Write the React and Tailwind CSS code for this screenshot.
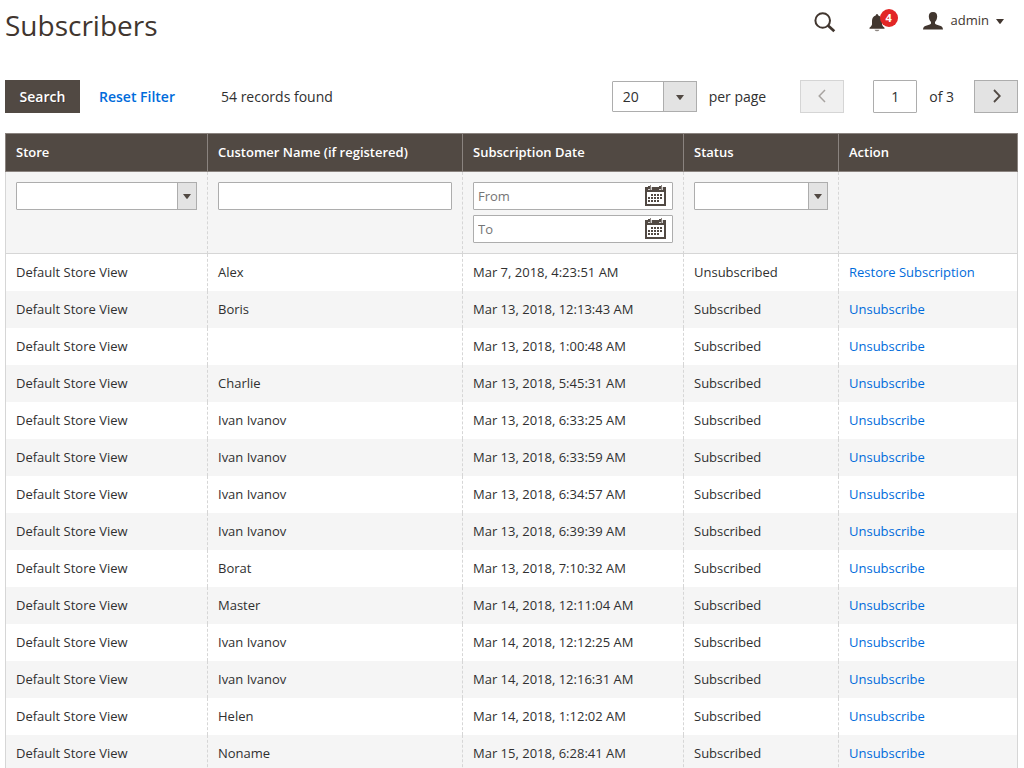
import React from "react";

const rows = [
  ["Alex", "Mar 7, 2018, 4:23:51 AM", "Unsubscribed"],
  ["Boris", "Mar 13, 2018, 12:13:43 AM", "Subscribed"],
  ["", "Mar 13, 2018, 1:00:48 AM", "Subscribed"],
  ["Charlie", "Mar 13, 2018, 5:45:31 AM", "Subscribed"],
  ["Ivan Ivanov", "Mar 13, 2018, 6:33:25 AM", "Subscribed"],
  ["Ivan Ivanov", "Mar 13, 2018, 6:33:59 AM", "Subscribed"],
  ["Ivan Ivanov", "Mar 13, 2018, 6:34:57 AM", "Subscribed"],
  ["Ivan Ivanov", "Mar 13, 2018, 6:39:39 AM", "Subscribed"],
  ["Borat", "Mar 13, 2018, 7:10:32 AM", "Subscribed"],
  ["Master", "Mar 14, 2018, 12:11:04 AM", "Subscribed"],
  ["Ivan Ivanov", "Mar 14, 2018, 12:12:25 AM", "Subscribed"],
  ["Ivan Ivanov", "Mar 14, 2018, 12:16:31 AM", "Subscribed"],
  ["Helen", "Mar 14, 2018, 1:12:02 AM", "Subscribed"],
  ["Noname", "Mar 15, 2018, 6:28:41 AM", "Subscribed"],
];

const headings = ["Store", "Customer Name (if registered)", "Subscription Date", "Status", "Action"];

function Caret({ className }) {
  return (
    <svg className={className} width="8" height="5" viewBox="0 0 8 5" aria-hidden="true">
      <path d="M0 0h8L4.6 4.6q-.6.6-1.2 0z" fill="currentColor" />
    </svg>
  );
}

function SelectBox({ label, options, large }) {
  return (
    <div className={large ? "relative h-[31px] w-[85px]" : "relative h-7 w-full"}>
      <select
        aria-label={label}
        className={
          "h-full w-full appearance-none rounded-[1px] border border-[#adadad] bg-white outline-none " +
          (large ? "pl-2.5 pr-9 text-sm" : "pl-1 pr-6 text-[13px]")
        }
      >
        {options.map((option) => (
          <option key={option}>{option}</option>
        ))}
      </select>
      <span
        className={
          "pointer-events-none absolute inset-y-0 right-0 flex items-center justify-center border border-[#adadad] bg-[#e3e3e3] text-[#514943] " +
          (large ? "w-[34px] pt-0.5" : "w-5")
        }
      >
        <Caret />
      </span>
    </div>
  );
}

function CalendarIcon() {
  return (
    <svg className="block" width="21" height="21" viewBox="0 0 21 21" aria-hidden="true">
      <path d="M0 2h21v19H0z" fill="#514943" />
      <path d="M2 7h17v12H2z" fill="#fff" />
      <path d="M3 0h4v5H3zM14 0h4v5h-4z" fill="#fff" opacity=".75" />
      <path d="M3 1h2v3H3zM14 1h2v3h-2z" fill="#514943" />
      <path d="M5 0h1v5H5zM16 0h1v5h-1z" fill="#8a837f" />
      <path
        d="M6 9h2v2H6zM9 9h2v2H9zM12 9h2v2h-2zM15 9h2v2h-2zM3 12h2v2H3zM6 12h2v2H6zM9 12h2v2H9zM12 12h2v2h-2zM15 12h2v2h-2zM3 15h2v2H3zM6 15h2v2H6zM9 15h2v2H9zM12 15h2v2h-2z"
        fill="#514943"
      />
    </svg>
  );
}

function DateField({ label }) {
  return (
    <div className="flex h-7 items-center rounded-[1px] border border-[#adadad] bg-white pl-1 pr-1.5">
      <input
        type="text"
        aria-label={label}
        placeholder={label}
        className="min-w-0 flex-1 bg-transparent text-[13px] outline-none placeholder:text-[#757575]"
      />
      <button type="button" aria-label={"Pick date: " + label} className="shrink-0 pb-px">
        <CalendarIcon />
      </button>
    </div>
  );
}

function TopActions() {
  return (
    <div className="flex items-start pr-3.5 text-[#41362f]">
      <button type="button" aria-label="Search" className="mt-3">
        <svg width="22" height="21" viewBox="0 0 22 21" fill="none" stroke="currentColor" aria-hidden="true">
          <circle cx="8.7" cy="8.5" r="7.3" strokeWidth="2" />
          <path d="M14 13.5l6.3 5.7" strokeWidth="2.8" />
        </svg>
      </button>
      <button type="button" aria-label="Notifications" className="ml-[33px] mt-[9px] flex">
        <svg className="mt-1" width="16" height="19" viewBox="0 0 16 19" aria-hidden="true">
          <path
            d="M8 1q1.200 0 1.300 1.500Q13 3.500 13 8v3.500q.5 2 2.500 3.200v1.100H.5v-1.100Q2.500 13.500 3 11.500V8Q3 3.500 6.700 2.500 6.800 1 8 1z"
            fill="currentColor"
          />
          <path d="M5.500 16.700h5q-.8 1.500-2.500 1.500t-2.500-1.500z" fill="currentColor" opacity=".6" />
        </svg>
        <span className="z-10 -ml-[5px] flex size-[18px] items-center justify-center rounded-full bg-[#e22626] text-[11px] font-bold text-white">
          4
        </span>
      </button>
      <button type="button" className="ml-[25px] mt-[11px] flex h-5 items-center text-[13px]">
        <svg width="20" height="18" viewBox="0 0 20 18" aria-hidden="true">
          <path
            d="M10 0c3 0 4.300 1.800 4.200 4.500C14.100 7.200 13 9 12 10v1.500c.5 1.100 3 1.600 5 2.300 2 .7 2.700 1.600 3 3.700H0c.3-2.100 1-3 3-3.700 2-.7 4.500-1.200 5-2.300V10C7 9 5.900 7.200 5.800 4.500 5.700 1.800 7 0 10 0z"
            fill="currentColor"
          />
        </svg>
        <span className="ml-2">admin</span>
        <Caret className="ml-[7px]" />
      </button>
    </div>
  );
}

const pagerButton = "flex h-[33px] w-11 items-center justify-center border border-[#adadad] bg-[#e3e3e3] pb-px text-[#514943] disabled:opacity-50";

function Toolbar() {
  return (
    <div className="mt-6 flex flex-wrap items-center justify-between text-sm text-[#303030]">
      <div className="flex items-center">
        <button
          type="button"
          className="h-[33px] w-[75px] bg-[#514943] font-semibold text-white text-shadow-[1px_1px_0_rgba(0,0,0,0.25)]"
        >
          Search
        </button>
        <button type="button" className="ml-[19px] font-semibold text-[#006bdb]">
          Reset Filter
        </button>
        <p className="ml-[46px]">54 records found</p>
      </div>
      <div className="flex items-center">
        <SelectBox label="Records per page" options={["20", "30", "50", "100", "200"]} large />
        <span className="ml-3">per page</span>
        <button type="button" aria-label="Previous page" disabled className={pagerButton + " ml-[34px]"}>
          <svg width="9" height="14" viewBox="0 0 9 14" fill="none" stroke="currentColor" strokeWidth="1.500" aria-hidden="true">
            <path d="M7 1L1.200 7 7 13" />
          </svg>
        </button>
        <input
          type="text"
          aria-label="Current page"
          defaultValue="1"
          className="ml-[29px] h-[33px] w-11 rounded-[1px] border border-[#adadad] bg-white text-center outline-none"
        />
        <span className="ml-3">of 3</span>
        <button type="button" aria-label="Next page" className={pagerButton + " ml-5"}>
          <svg width="9" height="14" viewBox="0 0 9 14" fill="none" stroke="currentColor" strokeWidth="1.800" aria-hidden="true">
            <path d="M2 1l5.800 6L2 13" />
          </svg>
        </button>
      </div>
    </div>
  );
}

const edges = "border-l border-dashed border-[#d6d6d6] px-2.5 first:border-solid last:border-r last:[border-right-style:solid] ";
const cell = edges + "pb-0.5";
const filterCell = edges + "border-b [border-bottom-style:solid] bg-[#f5f5f5] py-2.5 align-top";

export default function App() {
  return (
    <main className="bg-white pl-[5px] pr-1.5 font-['Open_Sans',sans-serif] text-[#303030]">
      <header className="flex h-14 items-start justify-between">
        <h1 className="pt-[5px] text-[28px] leading-10 text-[#41362f]">Subscribers</h1>
        <TopActions />
      </header>

      <Toolbar />

      <table className="mt-5 w-full table-fixed border-separate border-spacing-0 text-left text-[13px] leading-[18px]">
        <colgroup>
          <col className="w-[202px]" />
          <col className="w-[255px]" />
          <col className="w-[221px]" />
          <col className="w-[155px]" />
          <col />
        </colgroup>
        <thead>
          <tr>
            {headings.map((heading) => (
              <th
                key={heading}
                scope="col"
                className="h-[39px] border-y border-l border-[#8a837f] bg-[#514943] px-2.5 pb-0.5 font-semibold text-white last:border-r"
              >
                {heading}
              </th>
            ))}
          </tr>
        </thead>
        <tbody>
          <tr>
            <td className={filterCell}>
              <SelectBox label="Store" options={["", "Default Store View"]} />
            </td>
            <td className={filterCell}>
              <input
                type="text"
                aria-label="Customer Name"
                className="block h-7 w-full rounded-[1px] border border-[#adadad] bg-white px-1 outline-none"
              />
            </td>
            <td className={filterCell}>
              <div className="flex flex-col gap-[5px]">
                <DateField label="From" />
                <DateField label="To" />
              </div>
            </td>
            <td className={filterCell}>
              <SelectBox label="Status" options={["", "Subscribed", "Unsubscribed"]} />
            </td>
            <td className={filterCell} />
          </tr>
          {rows.map(([name, date, status]) => (
            <tr key={date} className="odd:bg-[#f5f5f5]">
              <td className={cell + " h-[37px]"}>Default Store View</td>
              <td className={cell}>{name}</td>
              <td className={cell}>{date}</td>
              <td className={cell}>{status}</td>
              <td className={cell}>
                <a href="#" className="text-[#006bdb]">
                  {status === "Unsubscribed" ? "Restore Subscription" : "Unsubscribe"}
                </a>
              </td>
            </tr>
          ))}
        </tbody>
      </table>
    </main>
  );
}
